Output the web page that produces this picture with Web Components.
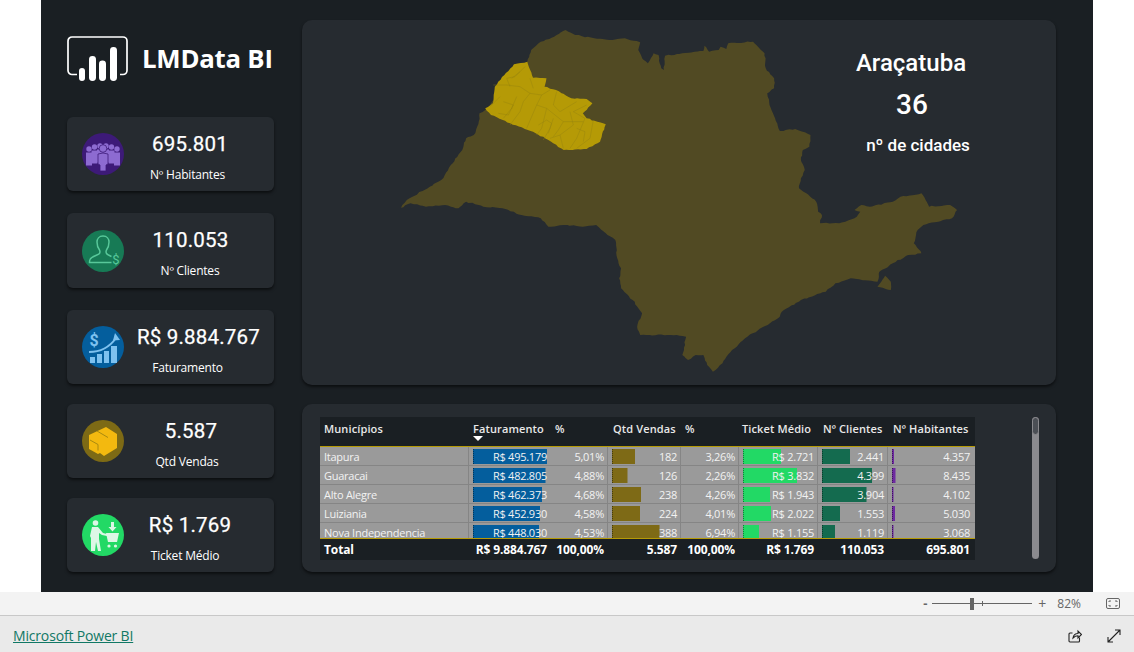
<!DOCTYPE html>
<html lang="pt-BR"><head><meta charset="utf-8"><title>LMData BI</title>
<style>html,body{margin:0;padding:0;background:#fff;font-family:"Open Sans","Liberation Sans",sans-serif}</style>
</head><body>
<lm-page>
  <lm-report>
    <lm-logo slot="logo">LMData BI</lm-logo>
    <lm-card slot="cards" icon="people" value="695.801" label="Nº Habitantes" vm="-21" lm="-26" top="0" h="74"></lm-card>
    <lm-card slot="cards" icon="client" value="110.053" label="Nº Clientes" vm="-20" lm="-21" top="22" h="75"></lm-card>
    <lm-card slot="cards" icon="money" value="R$ 9.884.767" label="Faturamento" vm="-4" lm="-26" top="22" h="74"></lm-card>
    <lm-card slot="cards" icon="box" value="5.587" label="Qtd Vendas" vm="-19" lm="-27" top="20" h="74"></lm-card>
    <lm-card slot="cards" icon="cart" value="R$ 1.769" label="Ticket Médio" vm="-21" lm="-31" top="20" h="74"></lm-card>
    <lm-map slot="map"></lm-map>
    <lm-table slot="table"></lm-table>
  </lm-report>
  <lm-zoombar></lm-zoombar>
  <lm-footer>Microsoft Power BI</lm-footer>
</lm-page>
<script>
const def=(name,html,init)=>customElements.define(name,class extends HTMLElement{
  constructor(){super();this.attachShadow({mode:'open'})}
  connectedCallback(){this.shadowRoot.innerHTML=typeof html==='function'?html(this):html;init&&init(this)}
});
const DIN='"Roboto","Liberation Sans",sans-serif';
const PANEL='#262b30';

def('lm-page',`<style>:host{display:block;width:1134px;height:652px;overflow:hidden;background:#fff}</style><slot></slot>`);

def('lm-report',`<style>
:host{display:grid;box-sizing:border-box;margin-left:41px;width:1052px;height:592px;background:#1a1f23;
 padding:20px 37px 0 26px;grid-template-columns:207px 754px;column-gap:28px;grid-template-rows:365px 168px;row-gap:19px}
.left{grid-row:1/3;display:flex;flex-direction:column}
.cards{display:flex;flex-direction:column;margin-top:18px}
</style>
<div class="left"><slot name="logo"></slot><div class="cards"><slot name="cards"></slot></div></div>
<slot name="map"></slot><slot name="table"></slot>`);

def('lm-logo',`<style>:host{display:flex;align-items:flex-start;gap:14px;box-sizing:border-box;height:80px;padding-top:16px;color:#fff}
svg{flex:none;width:61px;height:46px}
span{font:700 25.800px/26px "Open Sans",sans-serif;letter-spacing:-.25px;white-space:nowrap;margin-top:9px}
</style>
<svg viewBox="0 0 61 46" fill="none"><path d="M10 38.500H5a4 4 0 0 1-4-4V5a4 4 0 0 1 4-4h51a4 4 0 0 1 4 4v29.500a4 4 0 0 1-4 4h-3" stroke="#fff" stroke-width="1.700"/>
<g fill="#fff"><rect x="12" y="32" width="6" height="13" rx="3"/><rect x="22" y="20" width="7" height="25" rx="3.400"/><rect x="32" y="24.500" width="7" height="20.500" rx="3.400"/><rect x="43" y="11" width="7" height="34" rx="3.400"/></g></svg>
<span><slot></slot></span>`);

const icons={
people:`<circle cx="21" cy="21" r="21" fill="#3d1a78"/><g fill="#8d6bd1">
${[[7,16],[12.500,14],[18,13],[24,13],[29.500,14],[35,16]].map(([x,y])=>`<circle cx="${x}" cy="${y}" r="2.700"/><path d="M${x-3} ${y+3.500}h6v13h-6z"/>`).join('')}
<g stroke="#3d1a78" stroke-width=".8"><circle cx="21" cy="15.500" r="3.800"/><path d="M16 21q5-2 10 0v10l-2 1v6h-6v-6l-2-1z"/></g></g>`,
client:`<circle cx="21" cy="21" r="21" fill="#177a55"/><g fill="none" stroke="#58c89a" stroke-width="1.500"><path d="M21 6c-4 0-6 3-6 6 0 4 1 6 2.500 8 .5 1 .5 2.500 0 3.500-2 2-8 2.500-9.500 6-.5 1-.5 2-.5 3h22M21 6c4 0 6 3 6 6 0 4-1 6-2.500 8-.5 1-.5 2.500 0 3.500 1 1.500 3 2 5 3"/></g><text x="34" y="34" font-family="Roboto,sans-serif" font-size="13" fill="#58c89a" text-anchor="middle">$</text>`,
money:`<circle cx="21" cy="21" r="21" fill="#045e9d"/><text x="12" y="20" font-family="Roboto,sans-serif" font-weight="700" font-size="16" fill="#7ec1ef" text-anchor="middle">$</text>
<g fill="#7ec1ef"><rect x="8" y="31" width="5" height="6"/><rect x="15" y="28" width="5" height="9"/><rect x="22" y="25" width="5" height="12"/><rect x="29" y="20" width="6" height="17"/><path d="M33 7l5 7-7 .5z"/></g>
<path d="M7 26c10 0 20-4 27-14" fill="none" stroke="#7ec1ef" stroke-width="2"/>`,
box:`<circle cx="21" cy="21" r="21" fill="#7d6a15"/><path d="M7 15L24 7l11 7v14l-13 8-4-3-2 1-9-5z" fill="#f3b90f"/><path d="M15 11l11 6.500M8 20l8 4.500v6" fill="none" stroke="#a98a10" stroke-width="1"/>`,
cart:`<circle cx="21" cy="21" r="21" fill="#22d965"/><g fill="#dcf7e6"><circle cx="13.500" cy="9" r="2.800"/><path d="M10 13h6l5 6 4 1v2l-5-1-3-2v6l2 12h-3l-2-9-1 9H9V24L8 22z"/><path d="M24 19h13l-2 9H26z"/><circle cx="27" cy="32" r="1.600"/><circle cx="33.500" cy="32" r="1.600"/><path d="M29 8h3v5h2.500l-4 4.500-4-4.500H29z"/></g>`
};
def('lm-card',h=>`<style>
:host{display:flex;box-sizing:border-box;width:207px;height:${h.getAttribute('h')}px;margin-top:${h.getAttribute('top')}px;
 background:${PANEL};border-radius:6px;box-shadow:0 2px 3px rgba(0,0,0,.55);padding-left:15px;align-items:center;color:#fff}
svg{flex:none;width:42px;height:42px}
.t{flex:1;min-width:0;display:flex;flex-direction:column;align-items:center;margin-left:3px;margin-top:5px}
.v{font:400 20.500px/26px ${DIN};letter-spacing:.2px;white-space:nowrap;margin-left:${h.getAttribute('vm')}px;-webkit-text-stroke:.25px #fff}
.l{font:400 12px/16px "Open Sans",sans-serif;margin-top:10px;white-space:nowrap;margin-left:${h.getAttribute('lm')}px;letter-spacing:-.2px}
</style><svg viewBox="0 0 42 42">${icons[h.getAttribute('icon')]}</svg>
<div class="t"><span class="v">${h.getAttribute('value')}</span><span class="l">${h.getAttribute('label')}</span></div>`);

const outline=[[385,110],[395,75],[420,50],[455,35],[485,15],[510,30],[560,40],[600,45],[640,40],[680,52],[675,75],[685,100],[700,115],[715,85],[728,90],[735,130],[742,135],[745,92],[790,85],[845,78],[848,62],[860,80],[885,75],[890,65],[905,72],[910,55],[975,50],[1005,85],[1008,130],[1030,160],[1030,190],[1012,205],[1018,240],[1045,318],[1085,312],[1125,330],[1122,365],[1105,375],[1100,405],[1110,435],[1100,460],[1095,490],[1140,530],[1145,560],[1155,570],[1150,595],[1200,595],[1240,580],[1255,560],[1240,555],[1258,540],[1280,545],[1340,530],[1360,515],[1415,505],[1435,545],[1490,540],[1508,555],[1495,580],[1420,600],[1405,615],[1395,655],[1415,685],[1380,690],[1340,715],[1305,740],[1300,770],[1230,760],[1190,775],[1165,800],[1100,825],[1050,860],[1040,880],[960,935],[920,975],[895,1015],[870,1040],[855,1020],[845,990],[825,990],[805,1005],[790,990],[800,935],[760,930],[680,930],[672,905],[685,865],[660,825],[630,790],[625,760],[630,730],[620,700],[615,645],[590,625],[565,600],[530,605],[480,600],[440,605],[420,580],[370,570],[320,550],[270,545],[225,530],[205,550],[170,540],[120,545],[80,535],[55,548],[70,525],[130,485],[160,465],[185,420],[215,375],[225,340],[245,330],[258,290],[260,265],[275,255]];
const island=[[1320,752],[1335,770],[1335,795],[1300,785],[1310,770]];
const region=[[385,110],[350,118],[325,150],[300,185],[295,235],[275,250],[290,270],[340,295],[400,320],[440,345],[480,375],[540,372],[575,350],[590,298],[540,280],[530,265],[555,235],[540,222],[500,220],[460,195],[430,185],[435,160],[400,158]];
const lines=["165,125 135,155 110,160 120,185","70,180 110,180 150,185 180,205 215,210 240,195","215,210 200,240 170,310","180,205 160,230 150,260 120,300","140,215 125,250 100,280","260,200 250,240 270,260 320,230","200,240 230,250 280,290 340,290","230,250 215,310 200,330","250,280 240,310 220,345","300,260 310,300 270,330 280,370","345,280 320,340 300,370","370,285 360,340 320,370","180,160 190,190","270,330 240,340","350,240 310,260 345,280","100,230 130,240 115,270 85,265","205,300 230,285 245,295 235,325","280,290 265,315 250,335","320,310 345,320 340,350","125,160 150,140","60,245 90,215"];
let seed=7;const rnd=()=>{seed=(seed*16807)%2147483647;return seed/2147483647-.5};
const rough=(pts,amp)=>{let d='';pts.forEach((p,i)=>{const q=pts[(i+1)%pts.length];const n=Math.max(1,Math.round(Math.hypot(q[0]-p[0],q[1]-p[1])/8));
 for(let k=0;k<n;k++){const t=k/n,j=k?amp:0;d+=(d?'L':'M')+(p[0]+(q[0]-p[0])*t+rnd()*j).toFixed(1)+' '+(p[1]+(q[1]-p[1])*t+rnd()*j).toFixed(1)}});return d+'Z'};
def('lm-map',`<style>
:host{display:block;position:relative;background:${PANEL};border-radius:10px;box-shadow:0 2px 3px rgba(0,0,0,.55);color:#fff;overflow:hidden}
svg{display:block;width:600px;height:350px;margin:5px 0 0 78px}
.o{position:absolute;width:220px;text-align:center;font-family:${DIN};white-space:nowrap}
.a{left:499px;top:27px;font-size:24px;line-height:32px;font-weight:500}
.b{left:500px;top:66px;font-size:28px;line-height:38px;font-weight:500}
.c{left:506px;top:113px;font-size:17px;line-height:24px;font-weight:500}
</style>
<svg viewBox="0 0 1568 1050" preserveAspectRatio="none">
<path fill="#514a23" d="${rough(outline,3.500)}${rough(island,2)}"/>
<path fill="#b59a06" d="${rough(region,2.500)}"/>
<g transform="matrix(.871 0 0 1 235.2 0)" fill="none" stroke="#93800e" stroke-width="1.200">${lines.map(l=>`<polyline points="${l}"/>`).join('')}</g>
</svg>
<div class="o a">Araçatuba</div><div class="o b">36</div><div class="o c">nº de cidades</div>`);

const rows=[
["Itapura","R$ 495.179",74,"5,01%","182",23,"3,26%","R$ 2.721",38,"2.441",28,"4.357",2],
["Guaracai","R$ 482.805",72.500,"4,88%","126",15.500,"2,26%","R$ 3.832",54,"4.399",50,"8.435",3.500],
["Alto Alegre","R$ 462.373",69,"4,68%","238",29,"4,26%","R$ 1.943",27,"3.904",44.500,"4.102",1.500],
["Luiziania","R$ 452.930",67,"4,58%","224",28,"4,01%","R$ 2.022",28,"1.553",18,"5.030",3],
["Nova Independencia","R$ 448.030",66,"4,53%","388",47.500,"6,94%","R$ 1.155",16,"1.119",13,"3.068",1.500]];
const bar=(w,c)=>`style="background:repeating-linear-gradient(rgba(0,0,0,.45) 0 1px,transparent 1px 2px) 4px 2px/1px 15px no-repeat,linear-gradient(${c},${c}) 4px 2px/${w}px 15px no-repeat"`;
const C={f:'#045e9d',q:'#7e6a16',t:'#22d965',c:'#146b4f',h:'#6e2aa0'};
def('lm-table',`<style>
:host{display:flex;background:${PANEL};border-radius:10px;box-shadow:0 2px 3px rgba(0,0,0,.55);padding:13px 17px 13px 18px;justify-content:space-between}
.tb{width:655px;font:400 11px/18px "Open Sans",sans-serif;color:#f2f2f2;letter-spacing:-.25px}
.r{display:grid;grid-template-columns:149px 82px 57px 73px 58px 79px 70px 87px}
.h{height:29px;background:#1a1f23;border-bottom:1px solid #b59a06;color:#e8e8e8;font-weight:600;letter-spacing:.12px}
.h>div{padding:3px 0 0 4px;white-space:nowrap;position:relative}
.h>div.lead{padding-left:5px}
.h>div.tk{padding-left:3px}
.arrow{display:block;width:0;height:0;border:5px solid transparent;border-top:5px solid #fff;border-bottom:0;position:absolute;left:4px;top:19px}
.b{height:91px;overflow:hidden;background:#9a9a9a}
.b .r{height:19px;box-sizing:border-box;border-bottom:1px solid #858585}
.b .r>div{box-sizing:border-box;height:18px;border-right:1px solid #858585;text-align:right;padding-right:3px;white-space:nowrap;line-height:19px}
.b .r>div:first-child{text-align:left;padding-left:4px}
.b .r>div:last-child{border-right:0;padding-right:5px}
.b .r>div.nb{border-right:0;padding-right:4px}
.t{height:21px;background:#1a1f23;border-top:1px solid #b59a06;font-weight:700;color:#fff;font-size:12px;letter-spacing:-.12px}
.t>div{text-align:right;padding-right:4px;line-height:22px;white-space:nowrap}
.t>div:first-child{text-align:left;padding-left:4px}
.t>div:last-child{padding-right:5px}
.sb{width:7px;height:142px;background:#8a8a8e;border-radius:4px;overflow:hidden;flex:none;margin-left:auto}
.sb i{display:block;height:18px;background:#4b4f55;border:1px solid #8a8a8e;box-sizing:border-box;border-radius:4px}
</style>
<div class="tb">
<div class="r h"><div>Municípios</div><div>Faturamento<i class="arrow"></i></div><div>%</div><div class="lead">Qtd Vendas</div><div>%</div><div class="tk">Ticket Médio</div><div class="lead">Nº Clientes</div><div class="lead">Nº Habitantes</div></div>
<div class="b">${rows.map(r=>`<div class="r"><div>${r[0]}</div><div class="nb" ${bar(r[2],C.f)}>${r[1]}</div><div>${r[3]}</div><div ${bar(r[5],C.q)}>${r[4]}</div><div>${r[6]}</div><div ${bar(r[8],C.t)}>${r[7]}</div><div ${bar(r[10],C.c)}>${r[9]}</div><div ${bar(r[12],C.h)}>${r[11]}</div></div>`).join('')}</div>
<div class="r t"><div>Total</div><div>R$ 9.884.767</div><div>100,00%</div><div>5.587</div><div>100,00%</div><div>R$ 1.769</div><div>110.053</div><div>695.801</div></div>
</div>
<div class="sb"><i></i></div>`);

def('lm-zoombar',`<style>
:host{display:flex;box-sizing:border-box;height:24px;background:#f3f3f3;border-bottom:1px solid #c8c8c8;align-items:center;justify-content:flex-end;color:#666;font:400 12px/1 "Open Sans",sans-serif;padding-right:14px}
.m{font-weight:700;margin-right:5px;font-size:13px}
.s{width:100px;height:1px;background:#666;display:flex;align-items:center;padding-left:38px;box-sizing:border-box}
.s b{display:block;width:4px;height:12px;background:#666;flex:none}
.s i{display:block;width:1px;height:5px;background:#666;margin-left:8px;flex:none}
.p{font-size:14px;margin:0 11px 0 6px}
svg{width:14px;height:11px;margin-left:25px}
</style><span class="m">-</span><div class="s"><b></b><i></i></div><span class="p">+</span><span>82%</span>
<svg viewBox="0 0 14 11" fill="none" stroke="#666"><rect x=".5" y=".5" width="13" height="10" rx="1.500"/><path d="M3 4V3h2M11 4V3H9M3 7v1h2M11 7v1H9"/></svg>`);

def('lm-footer',`<style>
:host{display:flex;box-sizing:border-box;height:36px;background:#eaeaea;align-items:center;padding:3px 13px 0;justify-content:space-between}
a{font:400 14px/1 "Open Sans",sans-serif;letter-spacing:-.17px;color:#117865;text-decoration:underline}
div{display:flex;gap:25px;align-items:center}
svg{width:14px;height:14px}
</style><a href="#"><slot></slot></a>
<div><svg viewBox="0 0 14 14" fill="none" stroke="#222" stroke-width="1.100"><path d="M11.500 8.500v3.500a1 1 0 0 1-1 1H2a1 1 0 0 1-1-1V5a1 1 0 0 1 1-1h2.500"/><path d="M5 9c.5-3 2.500-4.500 5-4.500V2l3.500 3.500L10 9V6.800C8 6.800 6.500 7.500 5 9z"/></svg>
<svg viewBox="0 0 14 14" fill="none" stroke="#222" stroke-width="1.100"><path d="M1 13L13 1M8 1h5v5M1 8v5h5"/></svg></div>`);
</script>
</body></html>
